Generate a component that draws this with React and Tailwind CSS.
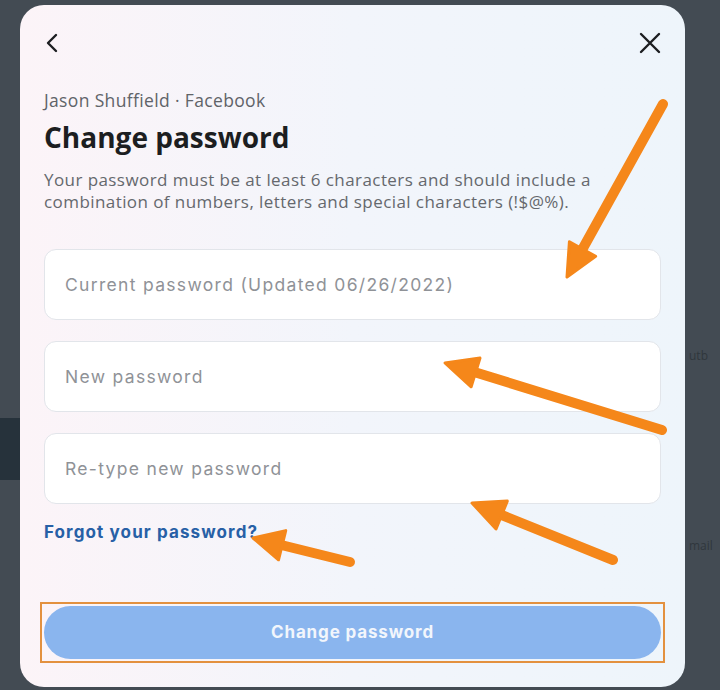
import React from "react";

// orange annotation arrow: line from tail to tip, triangle head at tip
function Arrow({ from, to, head = 32, half = 15, width = 10 }) {
  const dx = to[0] - from[0];
  const dy = to[1] - from[1];
  const len = Math.hypot(dx, dy);
  const ux = dx / len, uy = dy / len;
  const bx = to[0] - ux * head, by = to[1] - uy * head;
  const nx = -uy, ny = ux;
  const pts = `${to[0]},${to[1]} ${bx + nx * half},${by + ny * half} ${bx - nx * half},${by - ny * half}`;
  return (
    <g>
      <line x1={from[0]} y1={from[1]} x2={bx + ux * 4} y2={by + uy * 4} stroke="#f5871a" strokeWidth={width} strokeLinecap="round" />
      <polygon points={pts} fill="#f5871a" stroke="#f5871a" strokeWidth="3" strokeLinejoin="round" />
    </g>
  );
}

function Field({ placeholder }) {
  return (
    <input
      type="password"
      placeholder={placeholder}
      className="h-[71px] w-full rounded-[12px] border border-[#e2e5ea] bg-white px-[20px] text-[17.5px] tracking-[0.075em] text-[#1c1e21] outline-none placeholder:text-[#8f9297]"
      style={{ fontFamily: "Inter, 'Noto Sans', sans-serif" }}
    />
  );
}

export default function App() {
  return (
    <div className="relative h-[690px] w-[720px] overflow-hidden bg-[#434b53]" style={{ fontFamily: "'Open Sans', 'Noto Sans', sans-serif" }}>
      {/* backdrop page behind the overlay */}
      <div className="absolute left-0 top-[418px] h-[62px] w-[20px] bg-[#26323b]" />
      <div className="absolute left-[689px] top-[347px] text-[12px] text-[#30373d]">utb</div>
      <div className="absolute left-[689px] top-[537px] text-[12px] text-[#30373d]">mail</div>

      <div className="relative ml-[20px] mt-[5px] flex h-[682px] w-[665px] flex-col rounded-[24px] bg-gradient-to-r from-[#fcf4f8] via-[#f2f5fb] to-[#eef5fb] px-[24px] pt-[20px]">
        <div className="flex h-[36px] items-center justify-between">
          <svg width="20" height="22" viewBox="0 0 20 22" className="-ml-[1px]">
            <path d="M13 3 L5 11 L13 19" fill="none" stroke="#1c1e21" strokeWidth="2.4" strokeLinecap="round" strokeLinejoin="round" />
          </svg>
          <svg width="24" height="24" viewBox="0 0 24 24" className="mr-[-1px]">
            <path d="M3 3 L21 21 M21 3 L3 21" fill="none" stroke="#1c1e21" strokeWidth="2.4" strokeLinecap="round" />
          </svg>
        </div>

        <div className="mt-[28px] text-[17.5px] tracking-[0.02em] leading-[22px] text-[#606368]">Jason Shuffield · Facebook</div>
        <h1 className="mt-[8px] text-[28px] font-bold leading-[36px] text-[#1c1e21]">Change password</h1>
        <p className="mt-[14px] max-w-[575px] text-[17px] tracking-[0.025em] leading-[22px] text-[#65686d]">
          Your password must be at least 6 characters and should include a combination of numbers, letters and special characters (!$@%).
        </p>

        <div className="mt-[36px] flex flex-col gap-[21px]">
          <Field placeholder="Current password (Updated 06/26/2022)" />
          <Field placeholder="New password" />
          <Field placeholder="Re-type new password" />
        </div>

        <a
          className="mt-[17px] self-start text-[17px] font-bold tracking-[0.065em] leading-[22px] text-[#2760a6]"
          style={{ fontFamily: "Inter, 'Noto Sans', sans-serif" }}
        >
          Forgot your password?
        </a>

        <div className="-mx-[4px] mt-[59px] border-2 border-[#e3913f] p-[2px]">
          <button
            className="h-[53px] w-full rounded-full bg-[#8ab5ee] text-[17px] font-bold tracking-[0.05em] text-[#f2f6fc]"
            style={{ fontFamily: "Inter, 'Noto Sans', sans-serif" }}
          >
            Change password
          </button>
        </div>
      </div>

      {/* annotation arrows drawn over the screenshot */}
      <svg className="pointer-events-none absolute left-0 top-0" width="720" height="690" viewBox="0 0 720 690">
        <Arrow from={[663, 104]} to={[567, 277]} />
        <Arrow from={[662, 430]} to={[445, 363]} />
        <Arrow from={[613, 560]} to={[472, 503]} />
        <Arrow from={[350, 562]} to={[253, 538]} head={30} half={15} />
      </svg>
    </div>
  );
}
